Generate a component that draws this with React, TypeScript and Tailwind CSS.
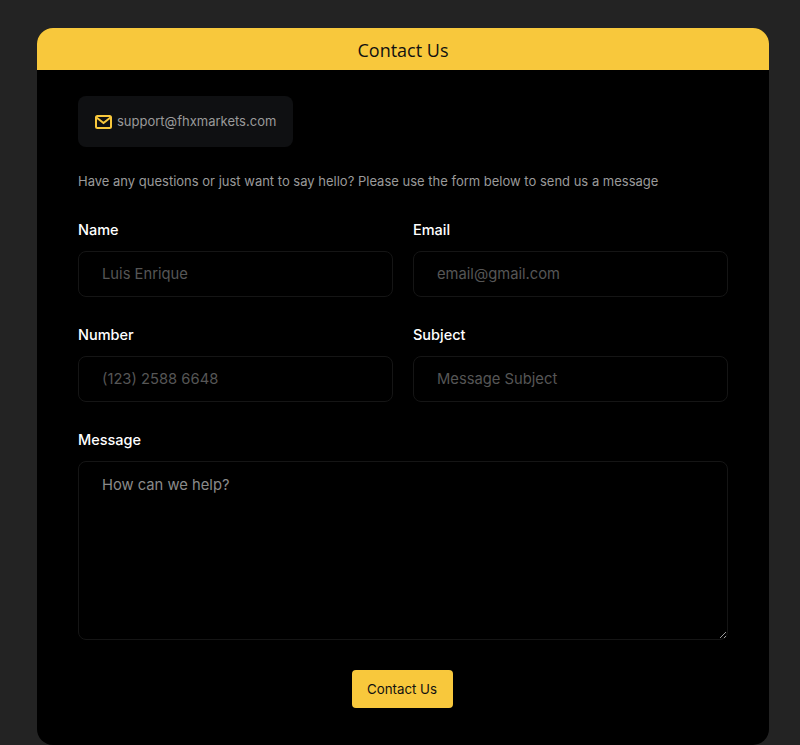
import React from "react";

const inter = "font-['Inter',sans-serif]";
const inputCls =
  "w-full h-[46px] rounded-lg border border-[#151515] bg-black pl-[23px] pr-4 pb-px text-[14.75px] text-white outline-none placeholder:text-[#565656] font-['Inter',sans-serif]";
const labelCls = "text-[14.5px] leading-[18px] font-medium text-white";

function Field({ label, placeholder }: { label: string; placeholder: string }) {
  return (
    <label className="flex flex-col gap-3">
      <span className={`${labelCls} pt-px`}>{label}</span>
      <input className={inputCls} placeholder={placeholder} />
    </label>
  );
}

export default function App() {
  return (
    <div className={`h-[745px] overflow-hidden bg-[#232323] pt-7 pl-[37px] pr-[31px] ${inter}`}>
      <div className="h-[717px] w-[732px] overflow-hidden rounded-2xl bg-black">
        <div className="flex h-[42px] items-center justify-center bg-[#f8c83c] pt-px font-['Open_Sans',sans-serif] text-lg text-[#111]">
          Contact Us
        </div>
        <div className="px-[41px] pt-[26px]">
          <div className="flex h-[51px] w-[215px] items-center gap-[5px] rounded-lg bg-[#0f1012] pl-[17px]">
            <svg width="17" height="14" viewBox="0 0 17 14" fill="none" stroke="#f8c83c" strokeWidth="2">
              <rect x="1" y="1" width="15" height="12" rx="1.5" />
              <path d="M1.5 2.5 L8.5 8 L15.5 2.5" />
            </svg>
            <span className="text-[13px] text-[#9a9a9a]">support@fhxmarkets.com</span>
          </div>
          <p className="mt-[25px] text-[13px] leading-[18px] text-[#9a9a9a]">
            Have any questions or just want to say hello? Please use the form below to send us a message
          </p>
          <form className="mt-[30px]">
            <div className="grid w-[650px] grid-cols-2 gap-x-5 gap-y-[28px]">
              <Field label="Name" placeholder="Luis Enrique" />
              <Field label="Email" placeholder="email@gmail.com" />
              <Field label="Number" placeholder="(123) 2588 6648" />
              <Field label="Subject" placeholder="Message Subject" />
            </div>
            <label className="mt-[29px] flex w-[650px] flex-col gap-3">
              <span className={labelCls}>Message</span>
              <textarea
                className="h-[179px] w-full rounded-lg border border-[#151515] bg-black px-[23px] py-3 text-[14.75px] leading-[22px] text-white outline-none placeholder:text-[#8a8a8a] font-['Inter',sans-serif]"
                placeholder="How can we help?"
              />
            </label>
            <div className="mt-[30px] flex w-[648px] justify-center">
              <button
                type="button"
                className="h-[38px] w-[101px] rounded bg-[#f8c83c] pt-px text-[13.3px] font-normal text-[#111]"
              >
                Contact Us
              </button>
            </div>
          </form>
        </div>
      </div>
    </div>
  );
}
